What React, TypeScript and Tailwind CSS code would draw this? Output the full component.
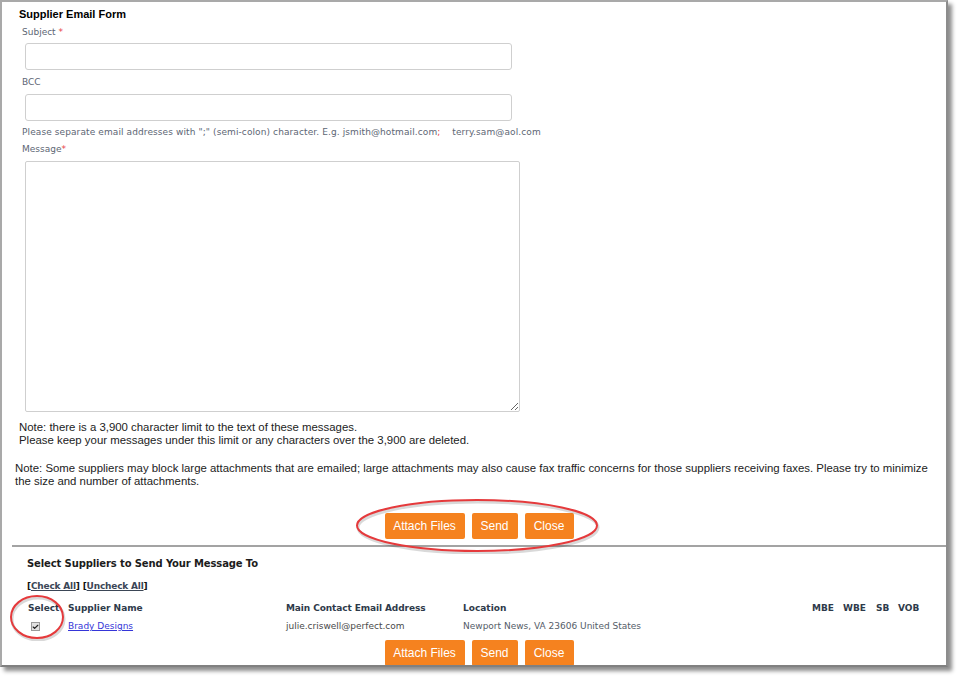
import { Check } from 'lucide-react';

const label = "font-['DejaVu_Sans',Verdana,sans-serif] text-[9px] leading-[12px] text-[#5d6674]";
const arial = "font-['Liberation_Sans',Arial,sans-serif]";

function OrangeButtons() {
  return (
    <div className={`flex justify-center gap-[7px] ${arial} text-[12px] text-white`}>
      <button className="w-[80px] h-[26px] rounded-[2px] bg-[#f5821f]">Attach Files</button>
      <button className="w-[46px] h-[26px] rounded-[2px] bg-[#f5821f]">Send</button>
      <button className="w-[49px] h-[26px] rounded-[2px] bg-[#f5821f]">Close</button>
    </div>
  );
}

function Ring({ x, y, w, h }: { x: number; y: number; w: number; h: number }) {
  // red annotation ellipse drawn over the screenshot
  return (
    <svg
      className="absolute pointer-events-none"
      style={{ left: x, top: y }}
      width={w}
      height={h}
      viewBox={`0 0 ${w} ${h}`}
      aria-hidden
    >
      <ellipse cx={w / 2 + 1} cy={h / 2 + 2} rx={w / 2 - 3} ry={h / 2 - 3} fill="none" stroke="rgba(0,0,0,0.15)" strokeWidth="3" />
      <ellipse cx={w / 2} cy={h / 2} rx={w / 2 - 3} ry={h / 2 - 3} fill="none" stroke="#e53a3c" strokeWidth="2" />
    </svg>
  );
}

export default function App() {
  return (
    <div className="relative w-[957px] h-[680px] bg-white overflow-hidden">
      <div className="w-[948px] h-[667px] bg-white border-2 border-[#a9a9a9] border-r-[#8c8c8c] border-b-[#808080] shadow-[4px_4px_4px_rgba(0,0,0,0.45)] overflow-hidden">
        {/* Email form */}
        <h1 className={`mt-[6px] pl-[17px] ${arial} font-bold text-[11px] leading-[13px] text-black`}>
          Supplier Email Form
        </h1>

        <div className="pl-[20px]">
          <div className={`mt-[5px] ${label}`}>
            Subject <span className="text-[#e8444a]">*</span>
          </div>
          <input className="block mt-[5px] ml-[3px] w-[487px] h-[27px] rounded-[3px] border border-[#cfcfcf] bg-white" />

          <div className={`mt-[6px] ${label}`}>BCC</div>
          <input className="block mt-[6px] ml-[3px] w-[487px] h-[27px] rounded-[3px] border border-[#cfcfcf] bg-white" />

          <div className={`mt-[5px] ${label} whitespace-pre tracking-[0.1px]`}>
            Please separate email addresses with ";" (semi-colon) character. E.g. jsmith@hotmail.com<span className="text-[#e8444a]">;</span>
            {'    '}terry.sam@aol.com
          </div>

          <div className={`mt-[5px] ${label}`}>
            Message<span className="text-[#e8444a]">*</span>
          </div>
          <textarea className="block mt-[6px] ml-[3px] w-[495px] h-[251px] border border-[#cfcfcf] rounded-[2px] bg-white" />
        </div>

        <p className={`mt-[9px] pl-[17px] ${arial} text-[11.4px] leading-[13px] text-[#222]`}>
          Note: there is a 3,900 character limit to the text of these messages.
          <br />
          Please keep your messages under this limit or any characters over the 3,900 are deleted.
        </p>

        <p className={`mt-[15px] pl-[13px] pr-[10px] ${arial} text-[11.4px] leading-[13px] text-[#222]`}>
          Note: Some suppliers may block large attachments that are emailed; large attachments may also cause fax traffic concerns for those suppliers receiving faxes. Please try to minimize the size and number of attachments.
        </p>

        <div className="mt-[25px] pl-[10px]">
          <OrangeButtons />
        </div>

        {/* Supplier selection */}
        <div className="ml-[10px] mt-[6px] h-[2px] bg-[#a3a3a3]" />

        <div className="pl-[25px] font-['DejaVu_Sans',Verdana,sans-serif]">
          <h2 className="mt-[10px] text-[10px] leading-[13px] font-bold text-[#1c1c1c] tracking-[-0.12px]">
            Select Suppliers to Send Your Message To
          </h2>
          <div className="mt-[10px] text-[9px] leading-[12px] font-bold text-[#111] tracking-[-0.2px]">
            [<span className="underline text-[#3b4656]">Check All</span>] [<span className="underline text-[#3b4656]">Uncheck All</span>]
          </div>

          <div className="mt-[10px] grid grid-cols-[40px_218px_177px_349px_31px_33px_22px_40px] pl-[1px] text-[9px] leading-[12px]">
            <div className="font-bold text-[#2e3a4a]">Select</div>
            <div className="font-bold text-[#2e3a4a]">Supplier Name</div>
            <div className="font-bold text-[#2e3a4a] tracking-[-0.1px]">Main Contact Email Address</div>
            <div className="font-bold text-[#2e3a4a]">Location</div>
            <div className="font-bold text-[#2e3a4a]">MBE</div>
            <div className="font-bold text-[#2e3a4a]">WBE</div>
            <div className="font-bold text-[#2e3a4a]">SB</div>
            <div className="font-bold text-[#2e3a4a]">VOB</div>

            <div className="mt-[6px] pl-[3px] pt-[2px]">
              <span className="flex items-center justify-center w-[9px] h-[9px] border border-[#9a9a9a] bg-[#e2e2e2]">
                <Check className="w-[8px] h-[8px] text-[#222]" strokeWidth={4} />
              </span>
            </div>
            <div className="mt-[6px]">
              <a href="#" className="underline text-[#3535d8]">Brady Designs</a>
            </div>
            <div className="mt-[6px] text-[#4a4a4a]">julie.criswell@perfect.com</div>
            <div className="mt-[6px] text-[#555d68]">Newport News, VA 23606 United States</div>
            <div />
            <div />
            <div />
            <div />
          </div>
        </div>

        <div className="mt-[8px] pl-[10px]">
          <OrangeButtons />
        </div>
      </div>

      <Ring x={354} y={497} w={246} h={57} />
      <Ring x={8} y={593} w={58} h={48} />
    </div>
  );
}
